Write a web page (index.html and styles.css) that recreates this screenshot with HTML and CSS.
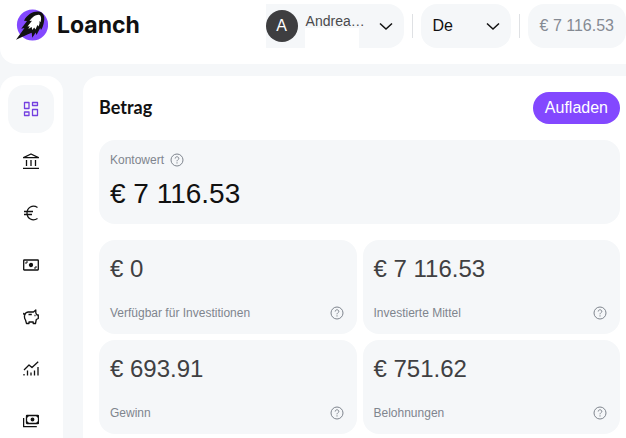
FILE: index.html
```html
<!DOCTYPE html>
<html lang="de">
<head>
<meta charset="utf-8">
<meta name="viewport" content="width=device-width, initial-scale=1">
<title>Loanch</title>
<link rel="stylesheet" href="styles.css">
</head>
<body>
<svg class="symbols" aria-hidden="true">
  <symbol id="chevron" viewBox="0 0 16 16"><path d="M2 5.500l6 5.500 6-5.500" fill="none" stroke="currentColor" stroke-width="1.500"/></symbol>
  <symbol id="help" viewBox="0 0 14 14"><g fill="none" stroke="currentColor"><circle cx="7" cy="7" r="6"/><path d="M5.200 5.500c0-2.300 3.600-2.300 3.600 0C8.800 6.700 7 6.800 7 8.300M7 9.300v1.200"/></g></symbol>
</svg>
<div class="app">
  <header class="topbar">
    <a class="brand" href="#">
      <svg class="brand-mark" viewBox="0 0 32 34" aria-hidden="true">
        <circle cx="16.500" cy="17" r="15.600" fill="#8348ff"/>
        <path d="M0 31.800L8.500 20l-3.300.8L11 13l-3-.3C11 6.500 17 3.300 22 3.500c5 .2 7 4.200 6 10-.5 3.500-1.500 6.500-3 8.500l-.8-2-3.700 7-.8-2.500-3.400 5.200-.6-5-3.700 1.500z" fill="#111"/>
        <path d="M11.500 18.500l4.500-5.700-2.500.2C16 9.500 19.500 6.600 22.700 6.800c2.800.3 2.800 4.200 1.800 7.500l-1.200-1.200c.6 2 .2 3.600-.9 5.400l-1-1.400-1.900 4.400-1.300-2.100-2 2.600-.5-3-3.400 2 1.500-2.800z" fill="#fff"/>
      </svg>
      <span>Loanch</span>
    </a>
    <div class="tools">
      <button class="account" type="button" aria-label="Konto">
        <span class="avatar">A</span>
        <span class="account-name"><span>Andrea…</span></span>
        <svg class="chevron" aria-hidden="true"><use href="#chevron"/></svg>
      </button>
      <span class="divider"></span>
      <div class="language">
        <select aria-label="Sprache"><option>De</option><option>En</option></select>
        <svg class="chevron" aria-hidden="true"><use href="#chevron"/></svg>
      </div>
      <span class="divider"></span>
      <div class="balance">€ 7 116.53</div>
    </div>
  </header>
  <div class="body">
    <nav class="sidebar" aria-label="Navigation">
      <a class="active" href="#" aria-label="Übersicht"><svg viewBox="0 0 16 16"><path d="M1.500 1.500h4.500v6h-4.500zM9.500 1.500h5v3h-5zM1.500 11h4.500v3.500h-4.500zM9.500 8.500h5v6h-5z"/></svg></a>
      <a href="#" aria-label="Bank"><svg viewBox="0 0 16 16"><path d="M.5 4.700L8 1l7.500 3.700zM0 15.500h16M3.500 7v6M8 7v6M12.500 7v6"/></svg></a>
      <a href="#" aria-label="Euro"><svg viewBox="0 0 16 16"><path d="M14.500 2.500C9.500-.7 4 2.500 4 8s5.500 8.700 10.500 5.500M1 6.500h9M1 9.500h8"/></svg></a>
      <a href="#" aria-label="Kredite"><svg viewBox="0 0 16 16"><rect x=".7" y="3" width="14.600" height="10" rx=".5"/><path d="M3 7V5h2M13 9v2h-2" stroke-width="1"/><circle class="solid" cx="8" cy="8" r="1.500"/></svg></a>
      <a href="#" aria-label="Sparen"><svg viewBox="0 0 16 16"><path d="M5 3h5.500L12.800 1v3l1.200 2h1.300v3.500l-2 1-.8 4h-2.300V13H6v1.500H3.500L2.500 11C.8 8.500 1 3.500 5 3M.8 3.800c-.3 1.200.2 2 1 2M5.500 5.500h3.300M11.500 6.500h1"/></svg></a>
      <a href="#" aria-label="Statistik"><svg viewBox="0 0 16 16"><path d="M1 9l5-5 3 2.500L15.200.8M1 13v1.500M4.500 9.500v5M8 11.500v3M11.500 9.500v5M15 6v8.500"/></svg></a>
      <a href="#" aria-label="Auszahlung"><svg viewBox="0 0 16 16"><rect x="3.500" y="2.500" width="12" height="8" rx=".5"/><path d="M.6 5v8.700h13.200M3.500 4.500l2-2M13.500 2.500l2 2M3.500 8.500l2 2M13.500 10.500l2-2"/><circle class="solid" cx="9.500" cy="6.500" r="1.300"/></svg></a>
    </nav>
    <main class="panel">
      <div class="panel-head">
        <h1>Betrag</h1>
        <button class="topup" type="button">Aufladen</button>
      </div>
      <section class="card total">
        <div class="label">Kontowert <svg class="help" aria-hidden="true"><use href="#help"/></svg></div>
        <div class="total-value">€ 7 116.53</div>
      </section>
      <div class="stats">
        <section class="card stat"><div class="value">€ 0</div><div class="label">Verfügbar für Investitionen <svg class="help" aria-hidden="true"><use href="#help"/></svg></div></section>
        <section class="card stat"><div class="value">€ 7 116.53</div><div class="label">Investierte Mittel <svg class="help" aria-hidden="true"><use href="#help"/></svg></div></section>
        <section class="card stat"><div class="value">€ 693.91</div><div class="label">Gewinn <svg class="help" aria-hidden="true"><use href="#help"/></svg></div></section>
        <section class="card stat"><div class="value">€ 751.62</div><div class="label">Belohnungen <svg class="help" aria-hidden="true"><use href="#help"/></svg></div></section>
      </div>
    </main>
  </div>
</div>
</body>
</html>
```
FILE: styles.css
```css
* { box-sizing: border-box; }
body { margin: 0; background: #f5f7f9; color: #111; font: 16px/20px "Liberation Sans", Arial, sans-serif; }
button, select { font: inherit; color: inherit; border: 0; }
a { color: inherit; text-decoration: none; }
.symbols { display: none; }
.app { display: flex; flex-direction: column; gap: 12px; height: 100vh; overflow: hidden; }

.topbar { display: flex; justify-content: space-between; padding: 4px 0 16px 16px; background: #fff; border-radius: 0 0 0 16px; }
.brand { display: flex; align-items: center; gap: 9px; padding-bottom: 2px; font: bold 23px/32px Inter, sans-serif; }
.brand-mark { width: 32px; height: 34px; }
.tools { display: flex; align-items: center; gap: 8px; }
.divider { width: 1px; height: 24px; background: #dfe1e4; }
.chevron { width: 16px; height: 16px; color: #111; pointer-events: none; }
.account { display: flex; align-items: center; height: 44px; padding: 0 10px 0 0; background: #f5f7f9; border-radius: 0 16px 16px 0; }
.account .chevron { margin-left: 19px; }
.avatar { width: 32px; height: 32px; border-radius: 50%; background: #3e3e40; color: #fff; line-height: 32px; text-align: center; }
.account-name { align-self: stretch; width: 54px; margin-left: 7px; padding: 6px 0 0 1px; background: linear-gradient(#f5f7f9 24px, #fff 24px); color: #4a4a4c; font-size: 14px; line-height: 22px; text-align: left; white-space: nowrap; }
.language { display: grid; align-items: center; width: 90px; }
.language > * { grid-area: 1 / 1; }
.language select { appearance: none; width: 100%; height: 44px; padding: 0 12px; background: #f5f7f9; border-radius: 16px; }
.language .chevron { justify-self: end; margin-right: 10px; }
.balance { padding: 12px; background: #f5f7f9; border-radius: 16px; color: #858a93; white-space: nowrap; }

.body { display: flex; flex: 1; gap: 20px; min-height: 0; }
.sidebar { display: flex; flex-direction: column; gap: 4px; width: 63px; padding: 9px 9px 0 8px; background: #fff; border-radius: 16px 16px 0 0; }
.sidebar a { display: grid; flex: none; place-items: center; height: 48px; border-radius: 16px; }
.sidebar .active { background: #f5f7f9; color: #7440e0; }
.sidebar svg { width: 16px; height: 16px; fill: none; stroke: currentColor; stroke-width: 1.3; stroke-linejoin: round; }
.sidebar .solid { fill: currentColor; }

.panel { flex: 1; min-width: 0; padding: 16px 6px 0 16px; background: #fff; border-radius: 16px 0 0 0; }
.panel-head { display: flex; justify-content: space-between; align-items: center; margin-bottom: 16px; }
h1 { margin: 0; padding-bottom: 2px; font: bold 18px/24px Lato, sans-serif; }
.topup { height: 32px; padding: 0 12px; border-radius: 16px; background: #8348ff; color: #fff; }
.card { padding: 12px 13px 12px 11px; background: #f5f7f9; border-radius: 16px; }
.label { display: flex; align-items: center; gap: 6px; color: #7f858e; font-size: 12px; line-height: 16px; }
.help { width: 14px; height: 14px; }
.total { margin-bottom: 16px; }
.total-value { margin-top: 8px; font-size: 28px; line-height: 36px; }
.stats { display: grid; grid-template-columns: 1fr 1fr; gap: 6px; }
.stat { display: flex; flex-direction: column; justify-content: space-between; height: 94px; padding-top: 13px; padding-bottom: 13px; }
.stat .label { justify-content: space-between; }
.value { color: #404042; font-size: 24px; line-height: 32px; }
```
